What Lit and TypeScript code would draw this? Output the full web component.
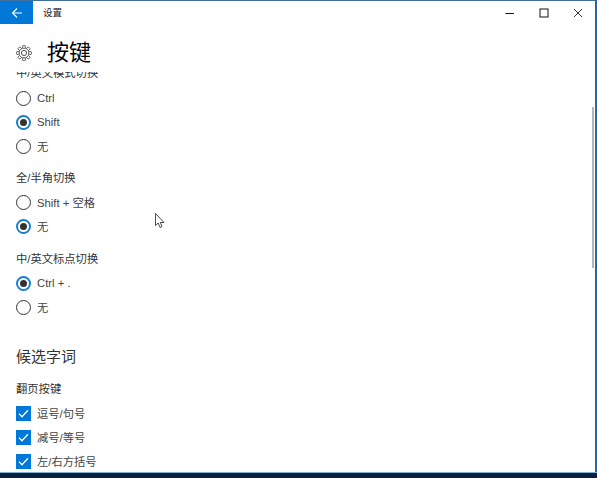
import { LitElement, html, css, svg } from "lit";
import { customElement } from "lit/decorators.js";

const gearTeeth = Array.from({ length: 8 }, (_, i) => i * 45);

@customElement("app-root")
export class AppRoot extends LitElement {
  static styles = css`
    :host {
      display: block;
      width: 597px;
      height: 478px;
      overflow: hidden;
      position: relative;
      background: #fff;
      font-family: "Liberation Sans", "Noto Sans CJK SC", sans-serif;
      color: #1a1a1a;
    }
    .window {
      height: 472px;
      box-sizing: border-box;
      border-top: 1px solid #3f6f9f;
      border-right: 2px solid #1f6aa6;
      display: flex;
      flex-direction: column;
      background: #fff;
    }
    .taskbar {
      height: 6px;
      background: #06223f;
      border-top: 1px solid #7fb0d0;
      box-sizing: border-box;
    }
    .titlebar {
      height: 23px;
      display: flex;
      align-items: center;
      flex: none;
    }
    .back {
      width: 33px;
      height: 23px;
      background: #0078d7;
      display: flex;
      align-items: center;
      justify-content: center;
    }
    .app-title {
      margin: 0 0 2px 10px;
      font-size: 9.5px;
      flex: 1;
    }
    .ctl {
      width: 34px;
      height: 23px;
      display: flex;
      align-items: center;
      justify-content: center;
    }
    .header {
      height: 48px;
      box-sizing: border-box;
      flex: none;
      display: flex;
      align-items: center;
      padding: 10px 0 0 16px;
      gap: 15px;
    }
    .header h1 {
      margin: 0;
      font-size: 22px;
      font-weight: 400;
      line-height: 30px;
      color: #000;
    }
    .scroll {
      flex: 1;
      min-height: 0;
      overflow: hidden;
      position: relative;
    }
    .content {
      margin-top: -9px;
      padding-left: 16px;
      font-size: 11.3px;
    }
    .label {
      height: 20px;
      line-height: 20px;
      color: #333;
    }
    .row {
      height: 24px;
      display: flex;
      align-items: center;
      gap: 6px;
      color: #444;
    }
    .spaced {
      margin-top: 10px;
      line-height: 22px;
    }
    .spaced.tight {
      margin-top: 9px;
    }
    .label + .row {
      margin-top: 3px;
    }
    .radio {
      width: 15px;
      height: 15px;
      border-radius: 50%;
      border: 1.5px solid #333;
      box-sizing: border-box;
      flex: none;
      display: flex;
      align-items: center;
      justify-content: center;
    }
    .radio.on {
      border: 2px solid #1a7fcf;
    }
    .radio.on::after {
      content: "";
      width: 7px;
      height: 7px;
      border-radius: 50%;
      background: #333;
    }
    .check {
      width: 15px;
      height: 15px;
      background: #0078d7;
      flex: none;
      display: block;
    }
    h2 {
      margin: 26px 0 0;
      height: 22px;
      font-size: 15px;
      font-weight: 400;
      line-height: 24px;
      color: #333;
    }
    .group-label {
      margin-top: 11px;
      line-height: 22px;
    }
    .thumb {
      position: absolute;
      right: 1px;
      top: 35px;
      width: 2px;
      height: 161px;
      background: #b5b5b5;
    }
    .cursor {
      position: absolute;
      left: 155px;
      top: 213px;
      width: 11px;
      height: 16px;
    }
  `;

  private radio(text: string, on = false) {
    return html`<div class="row"><span class="radio ${on ? "on" : ""}"></span><span>${text}</span></div>`;
  }

  private check(text: string) {
    return html`<div class="row">
      <svg class="check" viewBox="0 0 15 15"><path d="M3 7.8 L6 10.8 L12 4.2" fill="none" stroke="#fff" stroke-width="1.3"/></svg>
      <span>${text}</span>
    </div>`;
  }

  render() {
    return html`
      <div class="window">
        <div class="titlebar">
          <div class="back">
            <svg width="12" height="12" viewBox="0 0 12 12"><path d="M6 1.5 L1.5 6 L6 10.5 M1.5 6 H11" fill="none" stroke="#fff" stroke-width="1.1"/></svg>
          </div>
          <div class="app-title">设置</div>
          <div class="ctl"><svg width="10" height="10" viewBox="0 0 10 10"><path d="M0.5 5.5 H9" stroke="#111" stroke-width="1"/></svg></div>
          <div class="ctl"><svg width="10" height="10" viewBox="0 0 10 10"><rect x="1" y="1" width="8" height="8" fill="none" stroke="#111" stroke-width="1"/></svg></div>
          <div class="ctl"><svg width="10" height="10" viewBox="0 0 10 10"><path d="M1 1 L9 9 M9 1 L1 9" stroke="#222" stroke-width="0.9"/></svg></div>
        </div>
        <div class="header">
          <svg width="16" height="16" viewBox="0 0 16 16">
            <circle cx="8" cy="8" r="2.6" fill="none" stroke="#444" stroke-width="0.9"/>
            <circle cx="8" cy="8" r="5.2" fill="none" stroke="#444" stroke-width="0.9"/>
            ${gearTeeth.map(
              (a) => svg`<rect x="6.6" y="0.6" width="2.8" height="2.6" rx="0.5" fill="#fff" stroke="#444" stroke-width="0.8" transform="rotate(${a} 8 8)"/>`
            )}
          </svg>
          <h1>按键</h1>
        </div>
        <div class="scroll">
          <div class="content">
            <div class="label">中/英文模式切换</div>
            ${this.radio("Ctrl")}
            ${this.radio("Shift", true)}
            ${this.radio("无")}
            <div class="label spaced tight">全/半角切换</div>
            ${this.radio("Shift + 空格")}
            ${this.radio("无", true)}
            <div class="label spaced">中/英文标点切换</div>
            ${this.radio("Ctrl + .", true)}
            ${this.radio("无")}
            <h2>候选字词</h2>
            <div class="label group-label">翻页按键</div>
            ${this.check("逗号/句号")}
            ${this.check("减号/等号")}
            ${this.check("左/右方括号")}
          </div>
          <div class="thumb"></div>
        </div>
      </div>
      <div class="taskbar"></div>
      <svg class="cursor" viewBox="0 0 11 16"><path d="M0.5 0.5 V12.5 L3.2 10 L5 14.5 L7 13.6 L5.3 9.5 H9 Z" fill="#fff" stroke="#222" stroke-width="0.8"/></svg>
    `;
  }
}
